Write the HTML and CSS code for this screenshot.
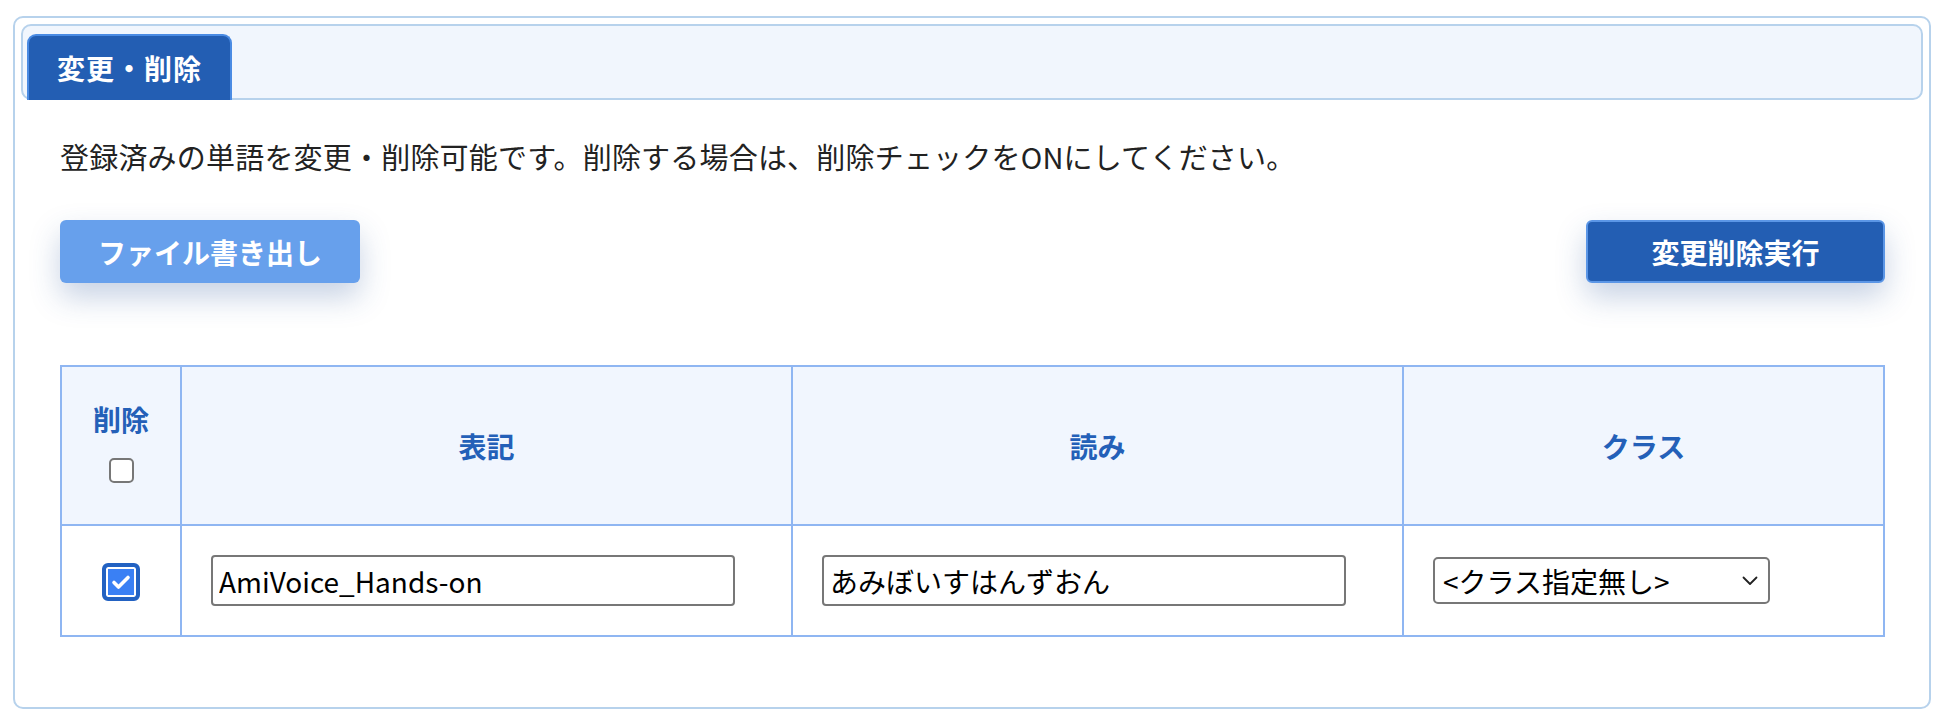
FILE: index.html
```html
<!DOCTYPE html>
<html lang="ja">
<head>
<meta charset="utf-8">
<title>変更・削除</title>
<link rel="stylesheet" href="styles.css">
</head>
<body>
<div class="panel">
  <div class="tabbar">
    <div class="tab">変更・削除</div>
  </div>
  <div class="content">
    <p class="desc">登録済みの単語を変更・削除可能です。削除する場合は、削除チェックをONにしてください。</p>
    <div class="actions">
      <button class="btn btn-light" type="button">ファイル書き出し</button>
      <button class="btn btn-dark" type="button">変更削除実行</button>
    </div>
    <table class="words">
      <colgroup>
        <col class="c-del"><col class="c-word"><col class="c-read"><col class="c-class">
      </colgroup>
      <thead>
        <tr>
          <th>
            <div class="th-del">
              <span>削除</span>
              <span class="cb"></span>
            </div>
          </th>
          <th>表記</th>
          <th>読み</th>
          <th>クラス</th>
        </tr>
      </thead>
      <tbody>
        <tr>
          <td class="td-del">
            <span class="cb-on">
              <svg viewBox="0 0 24 24" width="24" height="24"><path d="M5 12.5l4.5 4.5L19 7.5" fill="none" stroke="#fff" stroke-width="3.6" stroke-linecap="round" stroke-linejoin="round"/></svg>
            </span>
          </td>
          <td><input class="field field-wide" type="text" value="AmiVoice_Hands-on"></td>
          <td><input class="field field-wide" type="text" value="あみぼいすはんずおん"></td>
          <td>
            <div class="select-wrap">
              <select class="select"><option>&lt;クラス指定無し&gt;</option></select>
              <svg class="chev" viewBox="0 0 16 10" width="16" height="10"><path d="M1.5 1.5L8 8l6.5-6.5" fill="none" stroke="#222" stroke-width="1.8" stroke-linecap="round" stroke-linejoin="round"/></svg>
            </div>
          </td>
        </tr>
      </tbody>
    </table>
  </div>
</div>
</body>
</html>
```
FILE: styles.css
```css
* { box-sizing: border-box; }
html, body { background: #fff; }
body {
  margin: 0;
  padding: 16px 13px 0;
  font-family: "Noto Sans CJK JP", "Noto Sans", sans-serif;
  color: #222;
}
.panel {
  border: 2px solid #b7d2ec;
  border-radius: 10px;
  padding: 6px 6px 0;
  height: 693px;
}
.tabbar {
  height: 76px;
  border: 2px solid #b7d2ec;
  border-radius: 10px;
  background: #f1f6fd;
  padding: 0 4px;
  display: flex;
  align-items: flex-end;
}
.tab {
  width: 205px;
  height: 66px;
  margin-bottom: -2px;
  background: #235eb3;
  border: 2px solid #4a8be3;
  border-bottom: none;
  border-radius: 9px 9px 0 0;
  color: #fff;
  font-weight: 700;
  font-size: 28px;
  letter-spacing: 1px;
  display: flex;
  align-items: center;
  justify-content: center;
}
.content {
  padding: 0 38px 0 39px;
}
.desc {
  margin: 35px 0 0;
  font-size: 29px;
  line-height: 42px;
  color: #222;
  letter-spacing: 0.2px;
}
.actions {
  margin-top: 43px;
  display: flex;
  justify-content: space-between;
}
.btn {
  height: 63px;
  width: 300px;
  border-radius: 6px;
  font-family: inherit;
  font-size: 28px;
  font-weight: 700;
  color: #fff;
  box-shadow: 0 14px 30px rgba(40, 80, 150, 0.26);
  display: flex;
  align-items: center;
  justify-content: center;
  padding: 0;
}
.btn-light {
  background: #67a0ec;
  border: none;
}
.btn-dark {
  width: 299px;
  background: #235eb3;
  border: 2px solid #5b96e6;
}
.words {
  margin-top: 82px;
  width: 100%;
  border-collapse: collapse;
  table-layout: fixed;
}
.c-del { width: 120px; }
.c-word { width: 611px; }
.c-read { width: 611px; }
.words th, .words td {
  border: 2px solid #8fb6f2;
}
.words th {
  height: 159px;
  background: #f1f6fe;
  color: #2460b8;
  font-size: 28px;
  font-weight: 700;
  text-align: center;
  vertical-align: middle;
  padding: 0;
}
.th-del {
  display: flex;
  flex-direction: column;
  align-items: center;
  padding-bottom: 9px;
}
.th-del span:first-child { line-height: 40px; }
.cb {
  margin-top: 19px;
  width: 25px;
  height: 25px;
  border: 2px solid #777;
  border-radius: 5px;
  background: #fff;
}
.words td {
  height: 111px;
  padding: 0 0 0 29px;
  vertical-align: middle;
}
.words td.td-del {
  padding: 0;
  text-align: center;
}
.cb-on {
  display: inline-flex;
  align-items: center;
  justify-content: center;
  width: 38px;
  height: 38px;
  border: 4px solid #2362c2;
  border-radius: 6px;
  background: #3a80f4;
  box-shadow: inset 0 0 0 2px #fff;
  vertical-align: middle;
  margin-top: 2px;
}
.field {
  display: block;
  height: 51px;
  border: 2px solid #777;
  border-radius: 4px;
  padding: 0 6px;
  font-family: "Noto Sans CJK JP", "Noto Sans", sans-serif;
  font-size: 28px;
  color: #000;
  background: #fff;
}
.field-wide { width: 524px; }
.select-wrap {
  position: relative;
  width: 337px;
}
.select {
  display: block;
  width: 337px;
  height: 47px;
  appearance: none;
  -webkit-appearance: none;
  border: 2px solid #777;
  border-radius: 5px;
  background: #fff;
  padding: 0 8px;
  font-family: "Noto Sans CJK JP", "Noto Sans", sans-serif;
  font-size: 28px;
  color: #000;
}
.chev {
  position: absolute;
  right: 12px;
  top: 19px;
}
```
